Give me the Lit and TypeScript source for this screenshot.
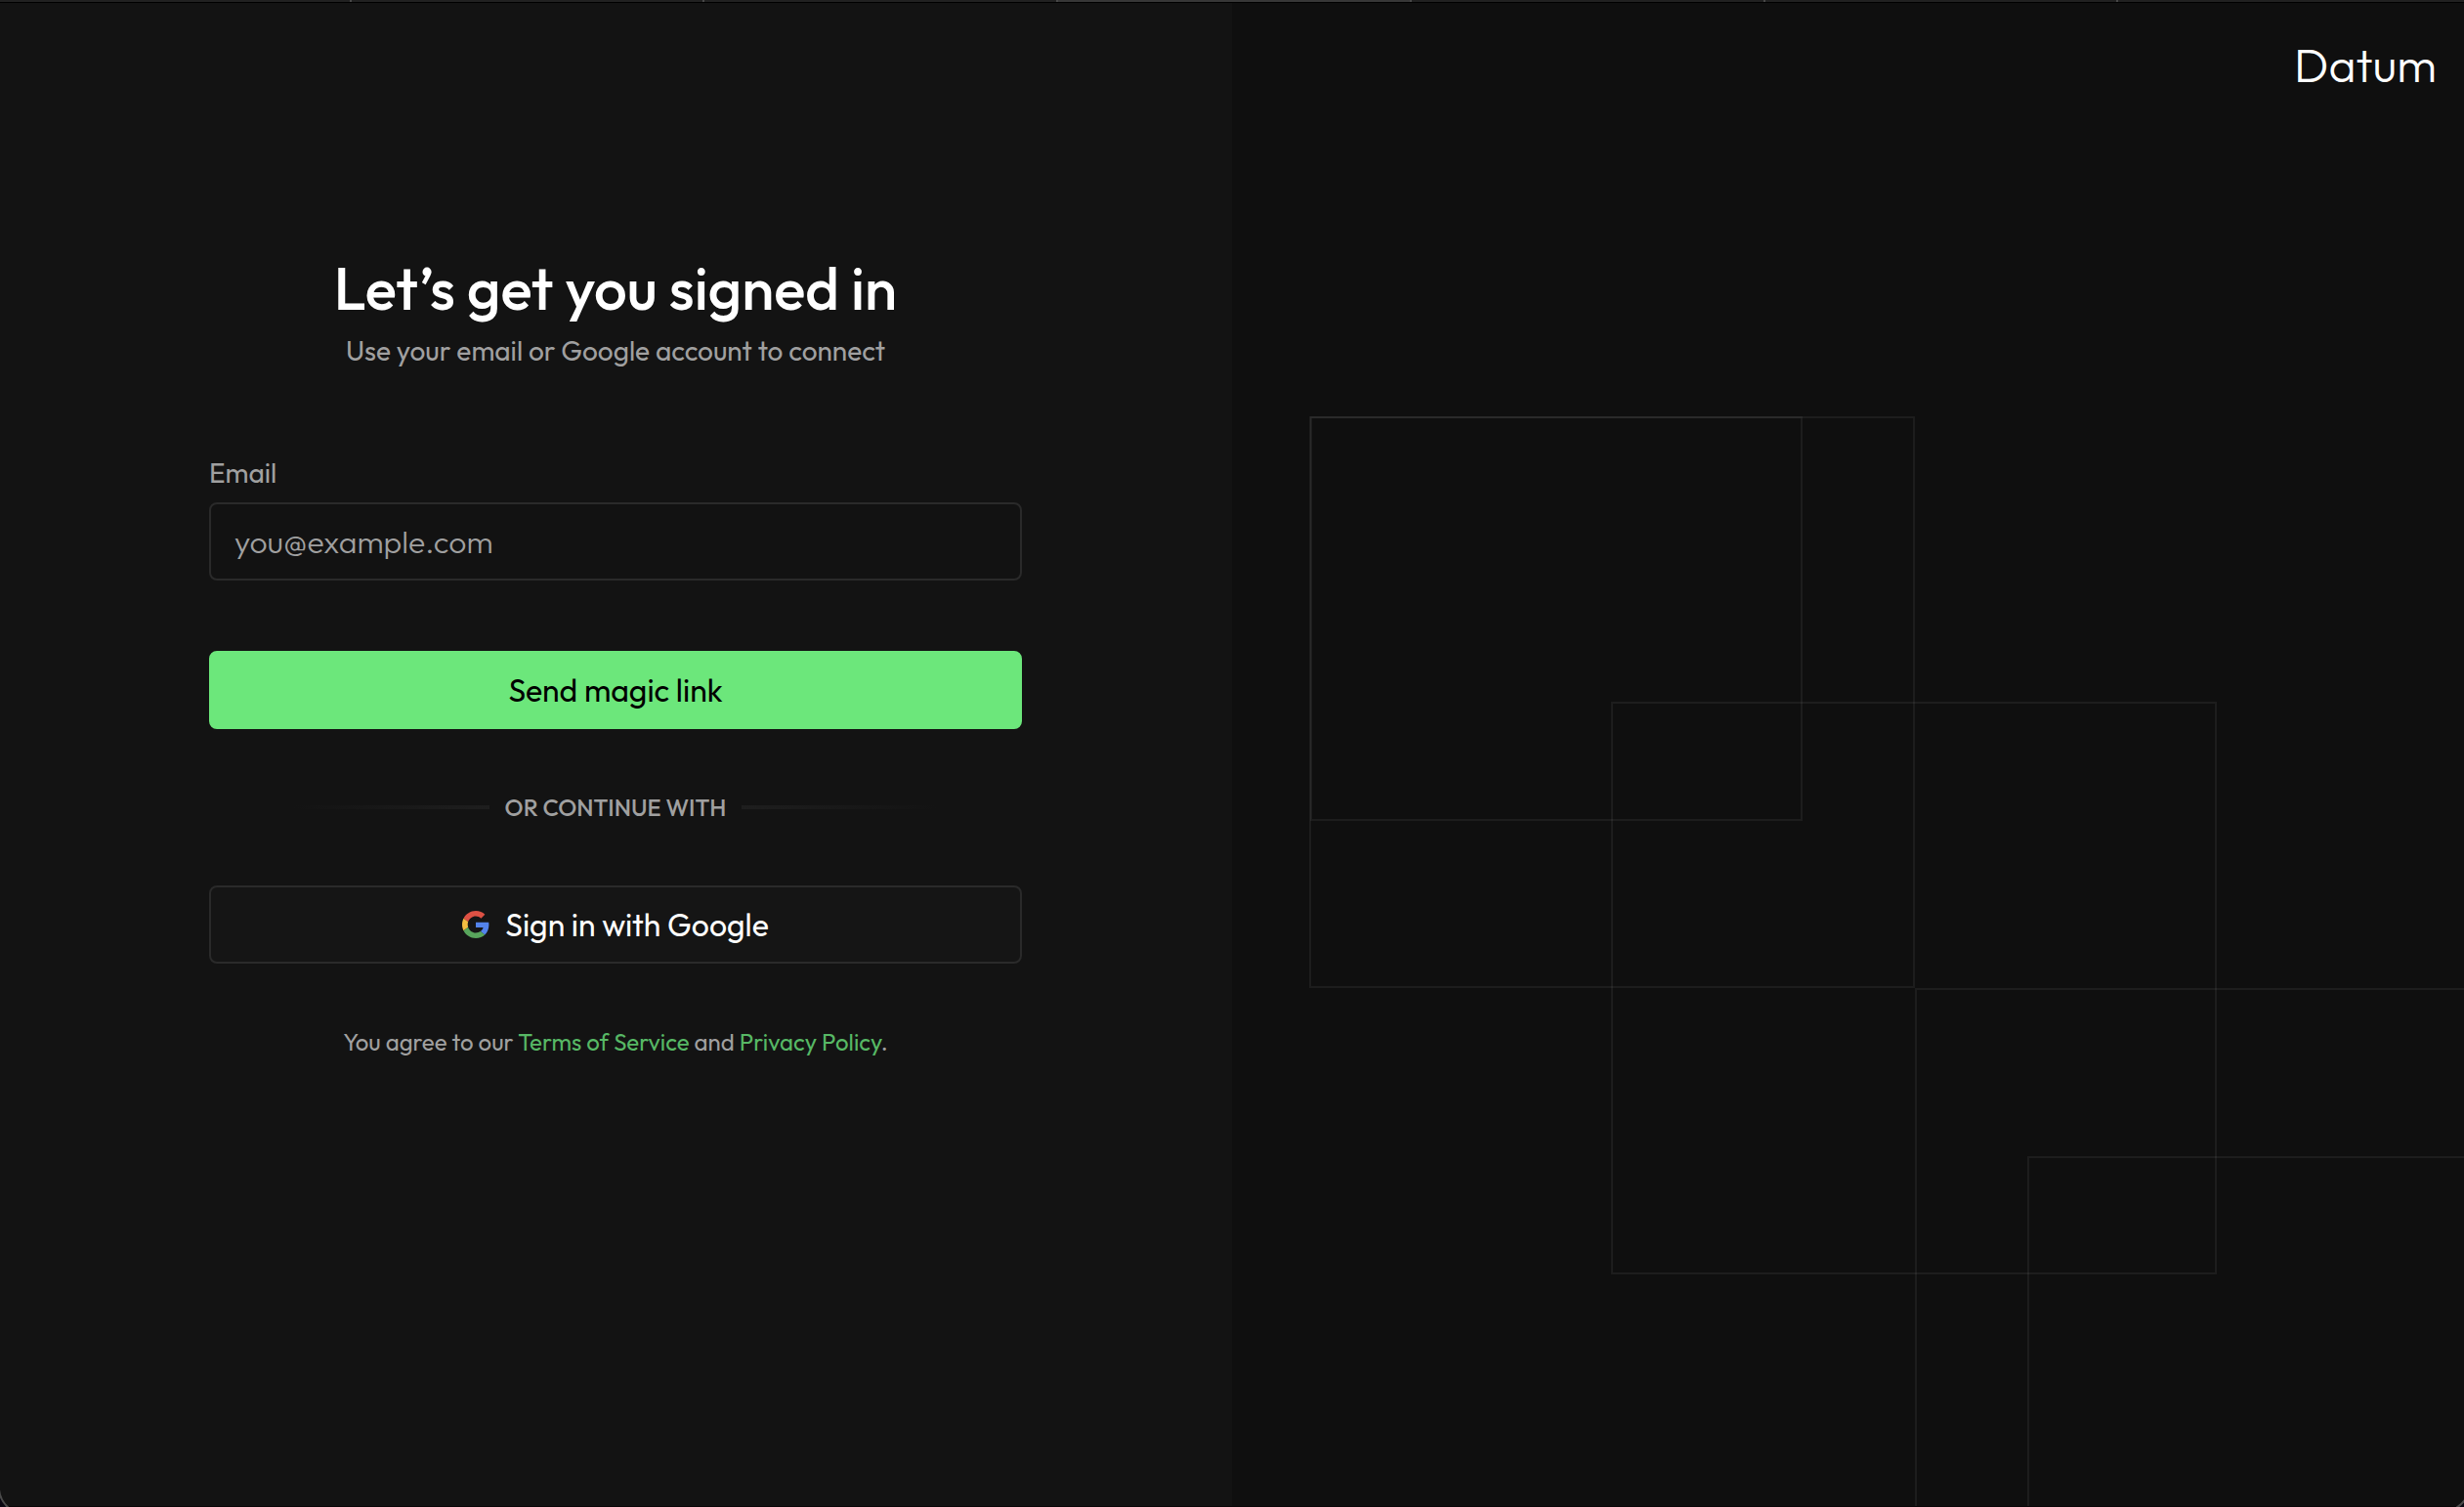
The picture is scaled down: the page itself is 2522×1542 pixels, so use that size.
import { LitElement, html, css, svg } from "lit";
import { customElement } from "lit/decorators.js";

interface Outline {
  x: number;
  y: number;
  w: number;
  h: number;
}

const OUTLINES: Outline[] = [
  { x: 80, y: 424, w: 618, h: 583 },
  { x: 81, y: 424, w: 502, h: 412 },
  { x: 389, y: 716, w: 618, h: 584 },
  { x: 700, y: 1009, w: 618, h: 584 },
  { x: 815, y: 1181, w: 618, h: 584 },
];

@customElement("window-tabs")
class WindowTabs extends LitElement {
  static styles = css`
    :host {
      display: grid;
      grid-template-columns: 360fr repeat(5, 362fr) 354fr;
      height: 2px;
      border-bottom: 1px solid #000;
      background: #212121;
    }
    .tab {
      border-right: 2px solid #484848;
    }
    .tab:last-child {
      border-right: 0;
    }
    .active {
      background: #373737;
    }
  `;

  render() {
    return [0, 1, 2, 3, 4, 5, 6].map(
      (i) => html`<div class=${i === 3 ? "tab active" : "tab"}></div>`
    );
  }
}

@customElement("sign-in-form")
class SignInForm extends LitElement {
  static styles = css`
    :host {
      display: block;
      width: 100%;
      max-width: 832px;
      color: #a0a0a0;
    }
    h1 {
      margin: 0;
      color: #fff;
      font-size: 60px;
      font-weight: 500;
      line-height: 72px;
      text-align: center;
    }
    p {
      margin: 0;
      text-align: center;
    }
    .subtitle {
      font-size: 28px;
      line-height: 40px;
      margin-top: 8px;
    }
    form {
      display: flex;
      flex-direction: column;
      margin-top: 85px;
    }
    label {
      font-size: 28px;
      line-height: 40px;
    }
    input,
    button {
      box-sizing: border-box;
      width: 100%;
      height: 80px;
      border: 2px solid #2a2a2a;
      border-radius: 8px;
      font: inherit;
      font-size: 32px;
    }
    input {
      margin-top: 10px;
      padding: 0 24px;
      background: #121212;
      color: #fff;
      font-weight: 300;
    }
    input::placeholder {
      color: #a0a0a0;
      opacity: 1;
    }
    button {
      display: flex;
      align-items: center;
      justify-content: center;
      gap: 16px;
      cursor: pointer;
    }
    .primary {
      margin-top: 72px;
      border-color: #6ce77b;
      background: #6ce77b;
      color: #000;
    }
    .google {
      background: #151515;
      color: #fff;
    }
    .google svg {
      width: 28px;
      height: 28px;
    }
    .divider {
      display: flex;
      align-items: center;
      justify-content: center;
      gap: 16px;
      padding: 64px 0;
      font-size: 24px;
      font-weight: 500;
      line-height: 32px;
    }
    .rule {
      flex: 0 1 200px;
      height: 4px;
      background: linear-gradient(to right, transparent, #1e1e1e);
    }
    .rule.end {
      background: linear-gradient(to left, transparent, #1e1e1e);
    }
    .terms {
      margin-top: 64px;
      font-size: 24px;
      line-height: 32px;
    }
    a {
      color: #57b865;
      text-decoration: none;
    }
  `;

  render() {
    return html`
      <h1>Let’s get you signed in</h1>
      <p class="subtitle">Use your email or Google account to connect</p>
      <form @submit=${(e: Event) => e.preventDefault()}>
        <label for="email">Email</label>
        <input id="email" type="email" placeholder="you@example.com" />
        <button class="primary" type="submit">Send magic link</button>
      </form>
      <div class="divider">
        <span class="rule"></span>
        <span>OR CONTINUE WITH</span>
        <span class="rule end"></span>
      </div>
      <button class="google" type="button">
        <svg viewBox="0 0 48 48" aria-hidden="true">
          <path fill="#dd5144" d="M24 9.5c3.54 0 6.71 1.22 9.21 3.6l6.85-6.85C35.9 2.38 30.47 0 24 0 14.62 0 6.51 5.38 2.56 13.22l7.98 6.19C12.43 13.72 17.74 9.5 24 9.5z" />
          <path fill="#5383ec" d="M46.98 24.55c0-1.57-.15-3.09-.38-4.55H24v9.02h12.94c-.58 2.96-2.26 5.48-4.78 7.18l7.73 6c4.51-4.18 7.09-10.36 7.09-17.65z" />
          <path fill="#f3bd42" d="M10.53 28.59c-.48-1.45-.76-2.99-.76-4.59s.27-3.14.76-4.59l-7.98-6.19C.92 16.46 0 20.12 0 24c0 3.88.92 7.54 2.56 10.78l7.97-6.19z" />
          <path fill="#58a55c" d="M24 48c6.48 0 11.93-2.13 15.89-5.81l-7.73-6c-2.15 1.45-4.92 2.3-8.16 2.3-6.26 0-11.57-4.22-13.47-9.91l-7.98 6.19C6.51 42.62 14.62 48 24 48z" />
        </svg>
        <span>Sign in with Google</span>
      </button>
      <p class="terms">
        You agree to our <a href="#terms">Terms of Service</a> and
        <a href="#privacy">Privacy Policy</a>.
      </p>
    `;
  }
}

@customElement("brand-panel")
class BrandPanel extends LitElement {
  static styles = css`
    :host {
      display: grid;
      background: #0f0f0f;
      overflow: hidden;
    }
    .brand,
    .pattern {
      grid-area: 1 / 1;
    }
    .brand {
      justify-self: end;
      align-self: start;
      padding: 35px 28px;
      color: #fff;
      font-size: 48px;
      font-weight: 300;
      line-height: 56px;
    }
    .pattern {
      width: 100%;
      height: 100%;
      min-height: 0;
      contain: size;
    }
    rect {
      fill: none;
      stroke: #fff;
      stroke-opacity: 0.06;
      stroke-width: 2;
    }
  `;

  render() {
    return html`
      <svg class="pattern" aria-hidden="true">
        ${OUTLINES.map((o) => svg`<rect x=${o.x} y=${o.y} width=${o.w} height=${o.h} />`)}
      </svg>
      <div class="brand">Datum</div>
    `;
  }
}

@customElement("app-root")
class AppRoot extends LitElement {
  static styles = css`
    :host {
      display: flex;
      flex-direction: column;
      position: relative;
      box-sizing: border-box;
      min-height: 100vh;
      border-bottom: 1px solid #0a0608;
      background: #0f0f0f;
      font-family: Outfit, Lato, "Liberation Sans", sans-serif;
    }
    main {
      flex: 1;
      display: grid;
      grid-template-columns: 1fr 1fr;
    }
    .left {
      display: flex;
      justify-content: center;
      align-items: flex-start;
      padding: 256px 64px 64px;
      border-right: 1px solid #131313;
      background: #131313;
    }
    .corner {
      position: absolute;
      bottom: -1px;
      width: 24px;
      height: 24px;
      fill: #0a0812;
      stroke: #4a4a4a;
      stroke-width: 2;
    }
    .corner.start {
      left: 0;
    }
    .corner.end {
      right: 0;
    }
  `;

  render() {
    return html`
      <window-tabs></window-tabs>
      <main>
        <section class="left"><sign-in-form></sign-in-form></section>
        <brand-panel></brand-panel>
      </main>
      <svg class="corner start" viewBox="0 0 24 24" aria-hidden="true">
        <path d="M-1 6Q0 18 10 26H-3Z" />
      </svg>
      <svg class="corner end" viewBox="0 0 24 24" aria-hidden="true">
        <path d="M26 15Q22 22 14 26H28Z" />
      </svg>
    `;
  }
}
